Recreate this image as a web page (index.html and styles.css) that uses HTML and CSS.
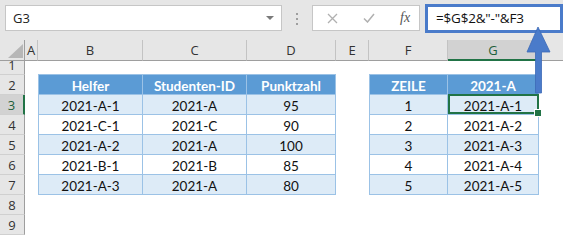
FILE: index.html
```html
<!DOCTYPE html>
<html lang="de">
<head>
  <meta charset="UTF-8" />
  <title>Excel - Helfer</title>
  <link rel="stylesheet" href="styles.css">
</head>
<body>
  <div class="toolbar">
    <div class="namebox">
      <span>G3</span>
      <svg class="caret" width="8" height="5" viewBox="0 0 8 5"><path d="M0 0h8L4 4z" fill="#7a7a7a"/></svg>
    </div>
    <div class="grip"><i></i><i></i><i></i></div>
    <div class="fbuttons">
      <svg width="11" height="11" viewBox="0 0 11 11"><path d="M1 1l9 9M10 1l-9 9" stroke="#b0b0b0" stroke-width="1.3" fill="none"/></svg>
      <svg width="12" height="10" viewBox="0 0 12 10"><path d="M1 5.5l3.5 3.5L11 1" stroke="#b0b0b0" stroke-width="1.5" fill="none"/></svg>
      <span class="fx">fx</span>
    </div>
    <div class="formula">=$G$2&amp;"-"&amp;F3</div>
  </div>

  <div class="sheet">
    <div class="corner"><svg width="15" height="14" viewBox="0 0 15 14"><path d="M15 0v14H0z" fill="#b7b7b7"/></svg></div>
    <div class="colhead">A</div>
    <div class="colhead">B</div>
    <div class="colhead">C</div>
    <div class="colhead">D</div>
    <div class="colhead">E</div>
    <div class="colhead">F</div>
    <div class="colhead active">G</div>
    <div class="colhead last"></div>

    <div class="rowhead short">1</div>
    <div class="rowhead">2</div>
    <div class="rowhead active">3</div>
    <div class="rowhead">4</div>
    <div class="rowhead">5</div>
    <div class="rowhead">6</div>
    <div class="rowhead">7</div>
    <div class="rowhead">8</div>
    <div class="rowhead">9</div>

    <div class="xtable students">
      <div class="th">Helfer</div><div class="th">Studenten-ID</div><div class="th">Punktzahl</div>
      <div class="td">2021-A-1</div><div class="td">2021-A</div><div class="td">95</div>
      <div class="td">2021-C-1</div><div class="td">2021-C</div><div class="td">90</div>
      <div class="td">2021-A-2</div><div class="td">2021-A</div><div class="td">100</div>
      <div class="td">2021-B-1</div><div class="td">2021-B</div><div class="td">85</div>
      <div class="td">2021-A-3</div><div class="td">2021-A</div><div class="td">80</div>
    </div>

    <div class="xtable lines">
      <div class="th">ZEILE</div><div class="th">2021-A</div>
      <div class="td">1</div><div class="td selected">2021-A-1</div>
      <div class="td">2</div><div class="td">2021-A-2</div>
      <div class="td">3</div><div class="td">2021-A-3</div>
      <div class="td">4</div><div class="td">2021-A-4</div>
      <div class="td">5</div><div class="td">2021-A-5</div>
    </div>
  </div>

  <svg class="arrow" width="28" height="70" viewBox="0 0 28 70">
    <path d="M13 1L2 26h8.5v41h6V26H25z" fill="#4a7bca" stroke="#3c6ab6" stroke-width="0.8"/>
  </svg>
</body>
</html>
```

FILE: styles.css
```css
* { box-sizing: border-box; }
body {
  margin: 0;
  width: 563px;
  height: 240px;
  overflow: hidden;
  background: #fff;
  font-family: "Open Sans", "Noto Sans", sans-serif;
  position: relative;
}

/* formula bar */
.toolbar {
  height: 40px;
  background: #e6e6e6;
  display: flex;
  align-items: flex-start;
  padding: 5px 0 0 5px;
}
.namebox {
  width: 277px;
  height: 26px;
  background: #fff;
  border: 1px solid #c6c6c6;
  display: flex;
  align-items: center;
  justify-content: space-between;
  padding: 0 7px 0 7px;
  font-size: 13px;
  color: #222;
}
.caret { margin-top: 1px; }
.grip {
  width: 30px;
  display: flex;
  flex-direction: column;
  align-items: center;
  gap: 3px;
  padding-top: 8px;
}
.grip i { width: 2px; height: 2px; background: #9e9e9e; }
.fbuttons {
  width: 108px;
  height: 26px;
  background: #fff;
  border: 1px solid #c6c6c6;
  display: flex;
  align-items: center;
  padding-left: 14px;
  gap: 25px;
}
.fx {
  font-family: "Liberation Serif", serif;
  font-style: italic;
  font-size: 14px;
  color: #555;
}
.formula {
  margin: -1px 0 0 5px;
  width: 138px;
  height: 29px;
  background: #fff;
  border: 3px solid #4a7bca;
  font-size: 13.5px;
  color: #111;
  padding: 2px 0 0 8px;
  white-space: nowrap;
  letter-spacing: -0.2px;
}

/* grid */
.sheet {
  display: grid;
  grid-template-columns: 25px 13px 105px 104px 89px 33px 79px 91px 1fr;
  grid-template-rows: 21px 14px repeat(8, 20px);
}
.corner, .colhead {
  background: #e6e6e6;
  border-bottom: 1px solid #9e9e9e;
  border-right: 1px solid #c3c3c3;
  font-size: 13px;
  color: #333;
  display: flex;
  align-items: center;
  justify-content: center;
}
.corner {
  border-right-color: #9e9e9e;
  align-items: flex-end;
  justify-content: flex-end;
  padding: 0 1px 2px 0;
}
.colhead.active {
  background: #d2d2d2;
  color: #1f5f3a;
  border-bottom: 2px solid #217346;
}
.colhead.last { border-right: none; }
.rowhead {
  grid-column: 1;
  background: #e6e6e6;
  border-right: 1px solid #9e9e9e;
  border-bottom: 1px solid #d0d0d0;
  font-size: 13px;
  color: #333;
  display: flex;
  align-items: center;
  justify-content: center;
  padding-top: 1px;
}
.rowhead.short { align-items: flex-end; }
.rowhead.active {
  background: #d2d2d2;
  color: #1f5f3a;
  border-right: 2px solid #217346;
}

/* tables */
.xtable {
  display: grid;
  grid-auto-rows: 20px;
  margin-top: -1px;
  border-left: 1px solid #9bc2e6;
  border-top: 1px solid #9bc2e6;
  font-family: Lato, "Liberation Sans", sans-serif;
  font-size: 13.5px;
  align-self: start;
}
.students {
  grid-column: 3 / 6;
  grid-row: 3 / 9;
  grid-template-columns: 104px 104px 89px;
}
.lines {
  grid-column: 7 / 9;
  grid-row: 3 / 9;
  grid-template-columns: 78px 91px;
}
.th, .td {
  border-right: 1px solid #9bc2e6;
  border-bottom: 1px solid #9bc2e6;
  display: flex;
  align-items: center;
  justify-content: center;
  padding-top: 2px;
}
.th {
  background: #5b9bd5;
  color: #fff;
  font-weight: 700;
}
.td { color: #111; }
.students .td:nth-child(6n+4),
.students .td:nth-child(6n+5),
.students .td:nth-child(6n+6) { background: #ddebf7; }
.lines .td:nth-child(4n+3),
.lines .td:nth-child(4n+4) { background: #ddebf7; }

.selected { position: relative; }
.selected::after {
  content: "";
  position: absolute;
  top: -1px;
  left: 0;
  right: -1px;
  bottom: 0;
  border: 2px solid #217346;
}
.selected::before {
  content: "";
  position: absolute;
  right: -4px;
  bottom: -3px;
  width: 6px;
  height: 6px;
  background: #217346;
  border: 1px solid #fff;
  z-index: 1;
}

.arrow {
  position: absolute;
  left: 525px;
  top: 26px;
}
```
